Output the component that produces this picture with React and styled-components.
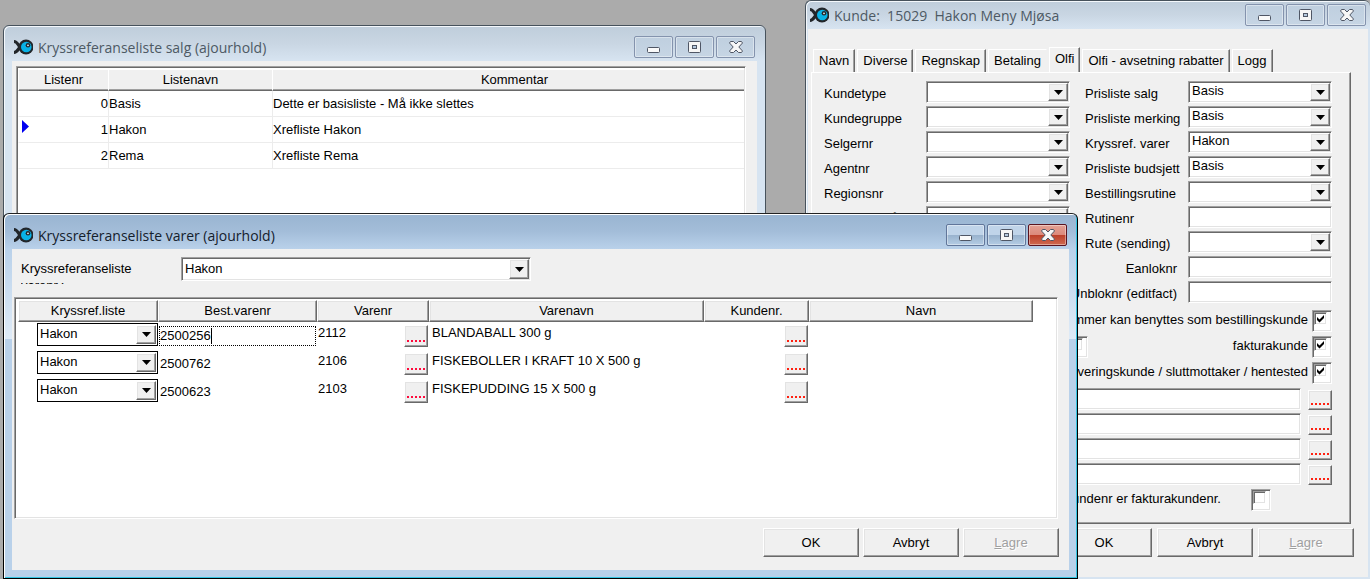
import React from "react";
import styled, { createGlobalStyle, css } from "styled-components";

const GlobalStyle = createGlobalStyle`
  *,
  *::before,
  *::after {
    box-sizing: border-box;
  }

  body {
    margin: 0;
    overflow: hidden;
    background: #ababab;
    color: #000;
    font-family: "Liberation Sans", Arial, sans-serif;
    font-size: 13px;
    line-height: 20px;
  }

  button,
  input,
  select {
    margin: 0;
    color: inherit;
    font: inherit;
  }
`;

const sunken = css`
  border: 1px solid;
  border-color: #a0a0a0 #fff #fff #a0a0a0;
  box-shadow: inset 1px 1px 0 #696969, inset -1px -1px 0 #e3e3e3;
`;

const raised = css`
  border: 1px solid;
  border-color: #fff #696969 #696969 #fff;
  box-shadow: inset -1px -1px 0 #a0a0a0, inset 1px 1px 0 #e3e3e3;
`;

const Desktop = styled.main`
  position: relative;
  height: 100vh;
  min-height: 579px;
  overflow: hidden;
  background: #ababab;
`;

/* windows */

const Window = styled.section`
  position: absolute;
  display: flex;
  flex-direction: column;
  border: 1px solid #47525c;
  border-radius: 6px 6px 0 0;
  padding: 0 8px 8px;
  background: linear-gradient(#bfcddb, #c9d6e3 50%, #d7e4f1 100%) 0 0 / 100% 35px no-repeat #d7e4f1;
  box-shadow: inset 1px 1px 0 #f4f8fc;
`;

const SalesWindow = styled(Window)`
  top: 25px;
  left: 3px;
  width: 763px;
  height: 420px;
`;

const CustomerWindow = styled(Window)`
  top: 0;
  left: 805px;
  right: 0;
  height: 579px;
  border-width: 1px 0 0 1px;
  padding: 0 2px 2px;
  background-size: 100% 28px;
`;

const ItemsWindow = styled(Window)`
  top: 213px;
  left: 3px;
  width: 1075px;
  height: 366px;
  border-color: #222 #000 #000;
  background:
    linear-gradient(#99b4d1, #a3bdd9 50%, #b9d1ea) 0 0 / 100% 35px no-repeat,
    linear-gradient(#b9d1ea, #dfebf7) 0 35px / 100% 90px no-repeat,
    #b9d1ea;
  box-shadow: inset 1px 1px 0 #fff, inset -1px -1px 0 #35c5e2;
`;

const TitleBar = styled.header`
  display: flex;
  flex: none;
  align-items: flex-start;
  height: ${(p) => (p.$compact ? 28 : 35)}px;
  padding: ${(p) => (p.$compact ? "3px 2px 0 2px" : "10px 2px 0 2px")};
  gap: 5px;
`;

const TitleIcon = styled.svg`
  flex: none;
  width: 19px;
  height: 16px;
  margin-top: 3px;
`;

const Title = styled.h1`
  flex: 1;
  margin: 0;
  color: ${(p) => (p.$active ? "#14202c" : "#4d5964")};
  font-family: "Open Sans", "Noto Sans", sans-serif;
  font-size: 14px;
  font-weight: 400;
  line-height: 24px;
  white-space: pre;
`;

const CaptionButtons = styled.div`
  display: flex;
  gap: 2px;
`;

const captionFill = {
  idle: "linear-gradient(#bfcfdf, #c6d5e4)",
  active: "linear-gradient(#c0d4e9 0 48%, #98b2cd 50%, #b4cce4)",
  close: "linear-gradient(#e3a195, #dc8a7c 48%, #bc3f29 50%, #cf6a50)",
};

const captionEdge = { idle: "#8493ad", active: "#61769a", close: "#5a1420" };

const CaptionButton = styled.button`
  display: grid;
  place-items: center;
  width: 39px;
  height: 22px;
  padding: 0;
  border: 1px solid ${(p) => captionEdge[p.$tone]};
  border-radius: 2px;
  background: ${(p) => captionFill[p.$tone]};
  box-shadow: inset 0 0 0 1px rgba(255, 255, 255, 0.4);
`;

const Client = styled.div`
  display: flex;
  flex: 1;
  flex-direction: column;
  min-height: 0;
  background: #f0f0f0;
`;

/* shared controls */

const ComboBox = styled.span`
  display: grid;
  grid-template-columns: 1fr 20px;
  height: ${(p) => p.$height || 22}px;
  padding: 1px;
  background: #fff;
  ${(p) => (p.$flat ? "border: 1px solid #000;" : sunken)}
`;

const ComboSelect = styled.select`
  grid-area: 1 / 1 / 2 / 3;
  appearance: none;
  min-width: 0;
  padding: 0 22px ${(p) => (p.$tall ? 0 : 2)}px ${(p) => (p.$flat ? 1 : 2)}px;
  border: 0;
  outline: 0;
  background: transparent;
  line-height: 16px;
`;

const ComboArrow = styled.span`
  grid-area: 1 / 2 / 2 / 3;
  display: grid;
  place-items: center;
  background: #f0f0f0;
  pointer-events: none;
  ${raised}
`;

const TextInput = styled.input`
  flex: 1;
  width: 100%;
  min-width: 0;
  height: 22px;
  padding: 0 3px;
  outline: 0;
  background: #fff;
  ${sunken}
`;

const LookupButton = styled.button`
  display: grid;
  flex: none;
  justify-items: center;
  align-items: end;
  width: 24px;
  height: ${(p) => p.$height || 20}px;
  padding: 0 0 4px;
  background: #f0f0f0;
  color: ${(p) => p.$color || "#ff2010"};
  ${raised}
`;

const PushButton = styled.button`
  width: 96px;
  height: 29px;
  padding: 0;
  background: #f0f0f0;
  ${raised}

  &:disabled {
    color: #a0a0a0;
    text-shadow: 1px 1px 0 #fff;
  }
`;

const ButtonRow = styled.footer`
  display: flex;
  justify-content: flex-end;
  gap: ${(p) => p.$gap}px;
  padding: ${(p) => p.$pad};
`;

const TickFrame = styled.span`
  display: grid;
  flex: none;
  justify-content: start;
  align-content: start;
  width: 20px;
  height: 22px;
  padding: 1px;
  background: #fff;
  ${sunken}
`;

const TickInput = styled.input`
  grid-area: 1 / 1;
  appearance: none;
  width: 13px;
  height: 13px;
  background: #fff;
  ${sunken}
`;

const TickMark = styled.svg`
  grid-area: 1 / 1;
  place-self: center;
  width: 9px;
  height: 9px;
  pointer-events: none;
`;

/* sales list */

const ListFrame = styled.div`
  flex: 1;
  margin: 5px 11px 0 4px;
  padding-top: 1px;
  background: #fff;
  ${sunken}
`;

const ListTable = styled.table`
  width: 100%;
  padding: 1px;
  border-spacing: 0;
  table-layout: fixed;

  th {
    height: 22px;
    padding: 0;
    border-top: 1px solid #fff;
    border-bottom: 1px solid #696969;
    border-left: 1px solid #fff;
    background: #f0f0f0;
    box-shadow: inset 0 -1px 0 #a0a0a0;
    font-weight: 400;
    line-height: 18px;
  }

  th:last-child {
    padding-left: 12px;
  }

  td {
    height: 26px;
    padding: 0;
    border-bottom: 1px solid #ececec;
    border-left: 1px solid #ececec;
    white-space: nowrap;
  }

  td:first-child {
    border-left-color: #fff;
  }
`;

const NumberCell = styled.div`
  display: flex;
  align-items: center;
  justify-content: space-between;
  padding-left: 3px;
`;

const RowPointer = styled.svg`
  width: 7px;
  height: 13px;
  margin-bottom: 7px;
  visibility: ${(p) => (p.$current ? "visible" : "hidden")};
`;

/* customer card */

const Tabs = styled.nav`
  display: flex;
  align-items: flex-end;
  height: 43px;
  padding-left: 5px;
  gap: 2px;
`;

const Tab = styled.button`
  height: ${(p) => (p.$active ? 26 : 23)}px;
  margin-bottom: ${(p) => (p.$active ? -1 : 0)}px;
  padding: 0 5px ${(p) => (p.$active ? 4 : 1)}px;
  border: 0;
  border-top: 1px solid #fff;
  border-left: 1px solid #fff;
  border-right: 1px solid ${(p) => (p.$edge === false ? "#f0f0f0" : "#696969")};
  background: #f0f0f0;
  box-shadow: inset -1px 0 0 ${(p) => (p.$edge === false ? "#f0f0f0" : "#a0a0a0")};
  white-space: nowrap;
`;

const TabPanel = styled.div`
  margin: 0 17px 0 3px;
  padding: 8px 18px 12px 12px;
  border: 1px solid;
  border-color: #fff #696969 #696969 #fff;
  box-shadow: inset -1px -1px 0 #a0a0a0;
`;

const FieldColumns = styled.div`
  display: grid;
  grid-template-columns: minmax(0, 246fr) minmax(0, 247fr);
  gap: 15px;
`;

const FieldGrid = styled.div`
  display: grid;
  grid-template-columns: ${(p) => p.$labels}px minmax(0, 1fr);
  grid-auto-rows: 22px;
  align-content: start;
  gap: 3px 0;
`;

const FieldLabel = styled.label`
  display: flex;
  justify-content: ${(p) => (p.$end ? "flex-end" : "flex-start")};
  padding: 3px ${(p) => (p.$end ? 11 : 0)}px 0 0;
  white-space: nowrap;
`;

const TickList = styled.div`
  display: flex;
  flex-direction: column;
  gap: 4px;
  padding-top: 7px;
`;

const TickRow = styled.div`
  display: flex;
  justify-content: flex-end;
  gap: 4px;
`;

const TickLabel = styled.label`
  min-width: 216px;
  text-align: right;
  white-space: nowrap;
`;

const LookupList = styled.div`
  display: flex;
  flex-direction: column;
  gap: 3px;
  padding: 4px 0 4px 102px;
`;

const LookupRow = styled.div`
  display: flex;
  align-items: flex-end;
  gap: 7px;
`;

const InvoiceRow = styled.div`
  display: flex;
  justify-content: flex-end;
  gap: 30px;
  padding-right: 61px;
`;

/* item cross references */

const FilterRow = styled.div`
  display: grid;
  grid-template-columns: 160px 350px;
  padding: 8px 0 0 9px;
`;

const FilterLabel = styled.label`
  height: 27px;
  padding-top: 3px;
  overflow: hidden;
  line-height: 17px;
`;

const ItemsFrame = styled.div`
  flex: 1;
  margin: 13px 11px 0 2px;
  padding: 2px 2px 0;
  background: #fff;
  ${sunken}
`;

const ItemsTable = styled.table`
  border-spacing: 0;
  table-layout: fixed;
  width: 1015px;
  margin-left: 1px;

  th {
    height: 22px;
    padding: 0;
    background: #f0f0f0;
    font-weight: 400;
    line-height: 18px;
    ${raised}
  }

  td {
    height: 28px;
    padding: 0;
    vertical-align: top;
    white-space: nowrap;
  }
`;

const ListCell = styled.div`
  padding: 1px 0 0 19px;
`;

const OrderCell = styled.div`
  display: flex;
  align-items: center;
  height: 20px;
  margin: 4px 1px 0 1px;
  border: 1px dotted ${(p) => (p.$focused ? "#000" : "transparent")};
`;

const OrderInput = styled.input`
  field-sizing: content;
  height: 18px;
  padding: 0;
  border: 0;
  outline: 0;
  background: transparent;
`;

const Caret = styled.span`
  width: 1px;
  height: 16px;
  background: #000;
`;

const LookupCell = styled.div`
  display: flex;
  justify-content: space-between;
  align-items: flex-start;
  padding: 1px 1px 0 1px;

  button {
    margin-top: 2px;
  }
`;

const NameCell = styled.div`
  padding: 1px 0 0 3px;
`;

function FishIcon() {
  return (
    <TitleIcon viewBox="0 0 19 16" aria-hidden="true">
      <path
        d="M0 2.500c3 0 3.500 2.500 6 5.500-2.500 3-3 5.500-6 5.500"
        fill="none"
        stroke="#22262a"
        strokeWidth="3.200"
      />
      <circle cx="12" cy="8" r="7.500" fill="#22262a" />
      <circle cx="12.300" cy="8" r="5.300" fill="#08b2e6" />
      <circle cx="14" cy="6.300" r="2.300" fill="#22262a" />
      <circle cx="14" cy="6.300" r="0.900" fill="#dff4fb" />
    </TitleIcon>
  );
}

function MinimizeGlyph() {
  return (
    <svg width="13" height="12" viewBox="0 0 13 12">
      <rect x="0.500" y="6.500" width="12" height="5" rx="1" fill="#fafafa" stroke="#4f5665" />
    </svg>
  );
}

function RestoreGlyph() {
  return (
    <svg width="13" height="12" viewBox="0 0 13 12">
      <rect x="0.500" y="0.500" width="12" height="11" rx="1" fill="#f6f6f6" stroke="#4f5665" />
      <rect x="4.500" y="4.500" width="4" height="3" fill="#b5c9de" stroke="#4f5665" />
    </svg>
  );
}

function CloseGlyph() {
  return (
    <svg width="14" height="12" viewBox="0 0 14 12">
      <path
        d="M1.500.5h3L7 3 9.500.5h3l1 1.500L9.800 6l3.700 4-1 1.500h-3L7 9l-2.500 2.500h-3L.5 10l3.700-4L.5 2z"
        fill="#f7f7f7"
        stroke="#4f5665"
        strokeLinejoin="round"
      />
    </svg>
  );
}

function WindowTitle({ text, active, compact }) {
  const tone = active ? "active" : "idle";
  return (
    <TitleBar $compact={compact}>
      <FishIcon />
      <Title $active={active}>{text}</Title>
      <CaptionButtons>
        <CaptionButton $tone={tone} aria-label="Minimer">
          <MinimizeGlyph />
        </CaptionButton>
        <CaptionButton $tone={tone} aria-label="Maksimer">
          <RestoreGlyph />
        </CaptionButton>
        <CaptionButton $tone={active ? "close" : "idle"} aria-label="Lukk">
          <CloseGlyph />
        </CaptionButton>
      </CaptionButtons>
    </TitleBar>
  );
}

function Combo({ id, value = "", height, flat, label }) {
  return (
    <ComboBox $height={height} $flat={flat}>
      <ComboSelect
        id={id}
        defaultValue={value}
        $flat={flat}
        $tall={height === 24}
        aria-label={label}
      >
        <option>{value}</option>
      </ComboSelect>
      <ComboArrow>
        <svg width="9" height="5" viewBox="0 0 9 5">
          <path d="M0 0h9L4.500 5z" />
        </svg>
      </ComboArrow>
    </ComboBox>
  );
}

function Lookup({ label, color, height }) {
  return (
    <LookupButton type="button" aria-label={label} $color={color} $height={height}>
      <svg width="18" height="2" viewBox="0 0 18 2" fill="currentColor">
        <path d="M0 0h2v2H0zM4 0h2v2H4zM8 0h2v2H8zM12 0h2v2h-2zM16 0h2v2h-2z" />
      </svg>
    </LookupButton>
  );
}

function Tick({ id, checked, label }) {
  return (
    <TickFrame>
      <TickInput type="checkbox" id={id} defaultChecked={checked} aria-label={label} />
      {checked && (
        <TickMark viewBox="0 0 9 9">
          <path d="M1 3l2.500 2.500L8 1v3L3.500 8.500 1 6z" />
        </TickMark>
      )}
    </TickFrame>
  );
}

function DialogButtons({ gap, pad }) {
  return (
    <ButtonRow $gap={gap} $pad={pad}>
      <PushButton type="button">OK</PushButton>
      <PushButton type="button">Avbryt</PushButton>
      <PushButton type="button" disabled>
        <u>L</u>agre
      </PushButton>
    </ButtonRow>
  );
}

const lists = [
  { nr: 0, name: "Basis", comment: "Dette er basisliste - Må ikke slettes" },
  { nr: 1, name: "Hakon", comment: "Xrefliste Hakon", current: true },
  { nr: 2, name: "Rema", comment: "Xrefliste Rema" },
];

function SalesList() {
  return (
    <SalesWindow>
      <WindowTitle text="Kryssreferanseliste salg (ajourhold)" />
      <Client>
        <ListFrame>
          <ListTable>
            <colgroup>
              <col style={{ width: 90 }} />
              <col style={{ width: 164 }} />
              <col />
            </colgroup>
            <thead>
              <tr>
                <th>Listenr</th>
                <th>Listenavn</th>
                <th>Kommentar</th>
              </tr>
            </thead>
            <tbody>
              {lists.map((row) => (
                <tr key={row.nr}>
                  <td>
                    <NumberCell>
                      <RowPointer viewBox="0 0 7 13" $current={row.current}>
                        <path d="M0 0l7 6.500L0 13z" fill="#0000f0" />
                      </RowPointer>
                      {row.nr}
                    </NumberCell>
                  </td>
                  <td>{row.name}</td>
                  <td>{row.comment}</td>
                </tr>
              ))}
            </tbody>
          </ListTable>
        </ListFrame>
      </Client>
    </SalesWindow>
  );
}

const tabs = [
  { text: "Navn" },
  { text: "Diverse" },
  { text: "Regnskap" },
  { text: "Betaling", edge: false },
  { text: "Olfi", active: true },
  { text: "Olfi - avsetning rabatter" },
  { text: "Logg" },
];

const leftFields = ["Kundetype", "Kundegruppe", "Selgernr", "Agentnr", "Regionsnr", "Leveringsmåte"];

const rightFields = [
  { text: "Prisliste salg", value: "Basis" },
  { text: "Prisliste merking", value: "Basis" },
  { text: "Kryssref. varer", value: "Hakon" },
  { text: "Prisliste budsjett", value: "Basis" },
  { text: "Bestillingsrutine" },
  { text: "Rutinenr", plain: true },
  { text: "Rute (sending)" },
  { text: "Eanloknr", plain: true, end: true },
  { text: "Unbloknr (editfact)", plain: true, end: true },
];

function CustomerCard() {
  return (
    <CustomerWindow>
      <WindowTitle text="Kunde:  15029  Hakon Meny Mjøsa" compact />
      <Client>
        <Tabs>
          {tabs.map((tab) => (
            <Tab key={tab.text} type="button" $active={tab.active} $edge={tab.edge}>
              {tab.text}
            </Tab>
          ))}
        </Tabs>
        <TabPanel>
          <FieldColumns>
            <FieldGrid $labels={102}>
              {leftFields.map((text, i) => (
                <React.Fragment key={text}>
                  <FieldLabel htmlFor={`left-${i}`}>{text}</FieldLabel>
                  <Combo id={`left-${i}`} />
                </React.Fragment>
              ))}
            </FieldGrid>
            <FieldGrid $labels={103}>
              {rightFields.map((field, i) => (
                <React.Fragment key={field.text}>
                  <FieldLabel htmlFor={`right-${i}`} $end={field.end}>
                    {field.text}
                  </FieldLabel>
                  {field.plain ? (
                    <TextInput id={`right-${i}`} />
                  ) : (
                    <Combo id={`right-${i}`} value={field.value} />
                  )}
                </React.Fragment>
              ))}
            </FieldGrid>
          </FieldColumns>
          <TickList>
            <TickRow>
              <TickLabel htmlFor="order">Kundenummer kan benyttes som bestillingskunde</TickLabel>
              <Tick id="order" checked />
            </TickRow>
            <TickRow>
              <Tick label="Kunde" />
              <TickLabel htmlFor="invoice">fakturakunde</TickLabel>
              <Tick id="invoice" checked />
            </TickRow>
            <TickRow>
              <TickLabel htmlFor="delivery">Leveringskunde / sluttmottaker / hentested</TickLabel>
              <Tick id="delivery" checked />
            </TickRow>
          </TickList>
          <LookupList>
            {[1, 2, 3, 4].map((n) => (
              <LookupRow key={n}>
                <TextInput aria-label={`Kunde ${n}`} />
                <Lookup label={`Finn kunde ${n}`} />
              </LookupRow>
            ))}
          </LookupList>
          <InvoiceRow>
            <label htmlFor="same">Kundenr er fakturakundenr.</label>
            <Tick id="same" />
          </InvoiceRow>
        </TabPanel>
        <DialogButtons gap={5} pad="4px 14px 0 0" />
      </Client>
    </CustomerWindow>
  );
}

const items = [
  { order: "2500256", nr: "2112", name: "BLANDABALL 300 g", focused: true },
  { order: "2500762", nr: "2106", name: "FISKEBOLLER I KRAFT 10 X 500 g" },
  { order: "2500623", nr: "2103", name: "FISKEPUDDING 15 X 500 g" },
];

const itemColumns = [
  { text: "Kryssref.liste", width: 140 },
  { text: "Best.varenr", width: 159 },
  { text: "Varenr", width: 112 },
  { text: "Varenavn", width: 275 },
  { text: "Kundenr.", width: 105 },
  { text: "Navn", width: 224 },
];

function ItemReferences() {
  return (
    <ItemsWindow>
      <WindowTitle text="Kryssreferanseliste varer (ajourhold)" active />
      <Client>
        <FilterRow>
          <FilterLabel htmlFor="list">
            Kryssreferanseliste
            <br />
            varenr.:
          </FilterLabel>
          <Combo id="list" value="Hakon" height={24} />
        </FilterRow>
        <ItemsFrame>
          <ItemsTable>
            <colgroup>
              {itemColumns.map((col) => (
                <col key={col.text} style={{ width: col.width }} />
              ))}
            </colgroup>
            <thead>
              <tr>
                {itemColumns.map((col) => (
                  <th key={col.text}>{col.text}</th>
                ))}
              </tr>
            </thead>
            <tbody>
              {items.map((item) => (
                <tr key={item.nr}>
                  <td>
                    <ListCell>
                      <Combo value="Hakon" height={23} flat label="Kryssref.liste" />
                    </ListCell>
                  </td>
                  <td>
                    <OrderCell $focused={item.focused}>
                      <OrderInput defaultValue={item.order} aria-label="Best.varenr" />
                      {item.focused && <Caret />}
                    </OrderCell>
                  </td>
                  <td>
                    <LookupCell>
                      {item.nr}
                      <Lookup label="Finn vare" color="#ff0a3c" height={22} />
                    </LookupCell>
                  </td>
                  <td>
                    <NameCell>{item.name}</NameCell>
                  </td>
                  <td>
                    <LookupCell>
                      <span />
                      <Lookup label="Finn kunde" height={22} />
                    </LookupCell>
                  </td>
                  <td />
                </tr>
              ))}
            </tbody>
          </ItemsTable>
        </ItemsFrame>
        <DialogButtons gap={4} pad="9px 10px 13px 0" />
      </Client>
    </ItemsWindow>
  );
}

export default function App() {
  return (
    <>
      <GlobalStyle />
      <Desktop>
        <SalesList />
        <CustomerCard />
        <ItemReferences />
      </Desktop>
    </>
  );
}
